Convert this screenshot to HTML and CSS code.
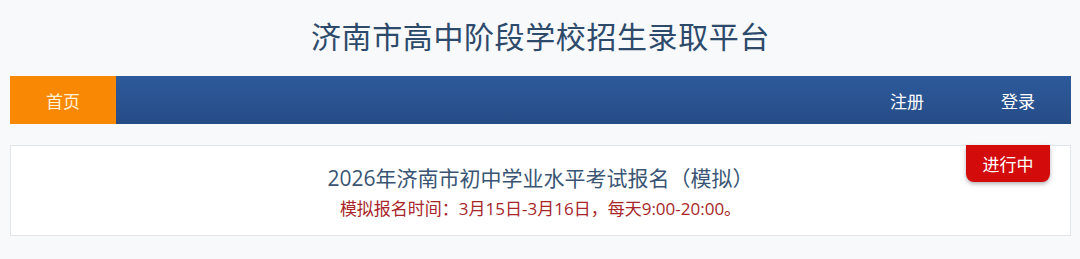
FILE: index.html
```html
<!DOCTYPE html>
<html lang="zh-CN">
<head>
<meta charset="utf-8">
<title>济南市高中阶段学校招生录取平台</title>
<link rel="stylesheet" href="styles.css">
</head>
<body>
<div class="page">
  <header class="site-header">
    <h1 class="site-title">济南市高中阶段学校招生录取平台</h1>
  </header>
  <nav class="nav">
    <a class="nav-item active">首页</a>
    <div class="nav-spacer"></div>
    <a class="nav-item wide">注册</a>
    <a class="nav-item">登录</a>
  </nav>
  <section class="card">
    <div class="card-title">2026年济南市初中学业水平考试报名（模拟）</div>
    <div class="card-sub">模拟报名时间：3月15日-3月16日，每天9:00-20:00。</div>
    <span class="badge">进行中</span>
  </section>
</div>
</body>
</html>
```

FILE: styles.css
```css
html, body {
  margin: 0;
  padding: 0;
}
body {
  background: #f7f9fb;
  font-family: "Open Sans", "Noto Sans CJK SC", sans-serif;
}
.page {
  padding: 0 9px 0 10px;
}
.site-header {
  height: 76px;
  display: flex;
  align-items: center;
  justify-content: center;
}
.site-title {
  margin: 0;
  font-size: 30px;
  font-weight: 400;
  color: #2e4a6b;
  letter-spacing: 0.6px;
  padding-bottom: 6px;
}
.nav {
  height: 48px;
  display: flex;
  background: linear-gradient(#2d5a9b, #264c86);
}
.nav-item {
  width: 106px;
  display: flex;
  align-items: center;
  justify-content: center;
  color: #ffffff;
  font-size: 17px;
}
.nav-item.wide {
  width: 116px;
}
.nav-item.active {
  background: #f98805;
  color: #fff2d8;
}
.nav-spacer {
  flex: 1;
}
.card {
  position: relative;
  margin-top: 21px;
  height: 89px;
  background: #ffffff;
  border: 1px solid #e1e4e8;
  display: flex;
  flex-direction: column;
  align-items: center;
  justify-content: center;
  gap: 5px;
}
.card-title {
  font-size: 21px;
  color: #3a5574;
  line-height: 28px;
  padding-top: 2px;
}
.card-sub {
  font-size: 17px;
  color: #a8262a;
  line-height: 23px;
}
.badge {
  position: absolute;
  top: -1px;
  right: 20px;
  width: 84px;
  height: 37px;
  display: flex;
  align-items: center;
  justify-content: center;
  background: #d30b0b;
  color: #ffffff;
  font-size: 17px;
  border-radius: 0 0 8px 8px;
  box-shadow: 0 2px 4px rgba(0, 0, 0, 0.3);
}
```
